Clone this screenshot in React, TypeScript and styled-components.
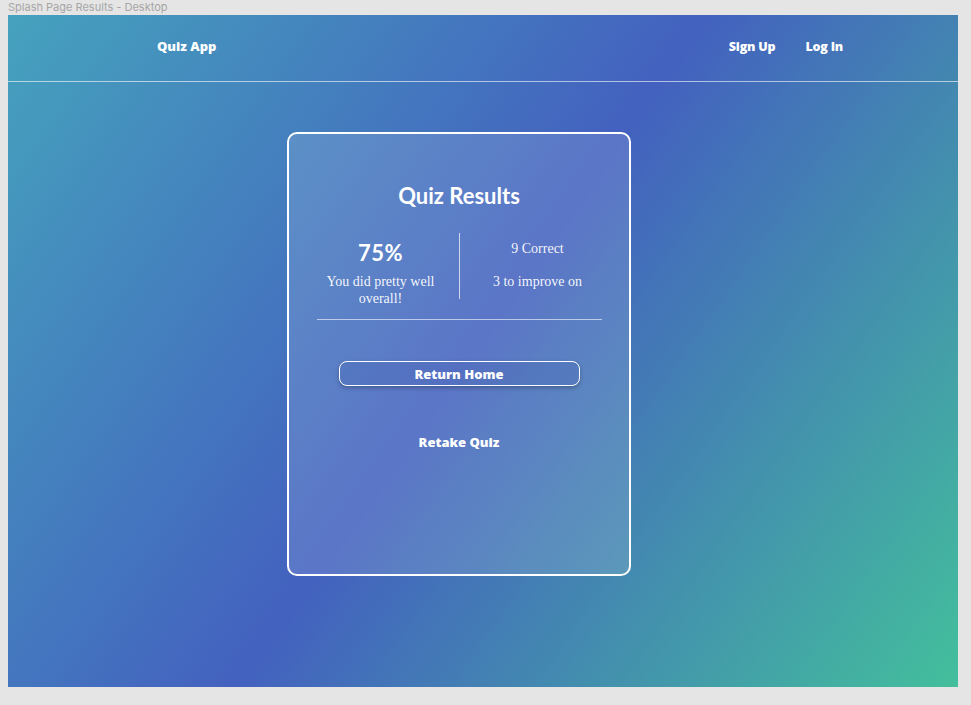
import styled, { createGlobalStyle } from 'styled-components';

const GlobalStyle = createGlobalStyle`
  html, body {
    margin: 0;
    padding: 0;
    background: #e5e5e5;
  }
  body {
    padding: 0 8px;
    font-family: 'Lato', 'Noto Sans', sans-serif;
  }
`;

const FrameLabel = styled.div`
  height: 15px;
  font-family: 'Inter', 'Noto Sans', sans-serif;
  font-size: 11px;
  line-height: 15px;
  color: #a6a6a6;
  white-space: nowrap;
`;

const Frame = styled.div`
  width: 950px;
  height: 672px;
  display: flex;
  flex-direction: column;
  color: #fff;
  background: linear-gradient(125deg, #45a2bd 0%, #4361bf 49%, #43bf9c 100%);
`;

const Header = styled.header`
  height: 67px;
  padding: 0 115px 4px 149px;
  box-sizing: border-box;
  display: flex;
  align-items: center;
  justify-content: space-between;
  border-bottom: 1px solid rgba(255, 255, 255, 0.6);
`;

const Brand = styled.span`
  font-family: 'Open Sans', 'Noto Sans', sans-serif;
  font-size: 13px;
  font-weight: 800;
`;

const NavLinks = styled.nav`
  display: flex;
  gap: 30px;
`;

const NavLink = styled.a`
  font-family: 'Open Sans', 'Noto Sans', sans-serif;
  font-size: 12.5px;
  font-weight: 800;
  letter-spacing: -0.2px;
  color: #fff;
  text-decoration: none;
`;

const Main = styled.main`
  padding: 50px 0 0 279px;
`;

const Card = styled.section`
  width: 344px;
  height: 444px;
  box-sizing: border-box;
  border: 2px solid #fff;
  border-radius: 10px;
  background: rgba(255, 255, 255, 0.13);
  padding: 48px 0 0;
  display: flex;
  flex-direction: column;
  align-items: center;
`;

const Title = styled.h1`
  margin: 0;
  font-size: 22px;
  line-height: 28px;
  font-weight: 700;
`;

const Stats = styled.div`
  margin-top: 23px;
  width: 313px;
  display: grid;
  grid-template-columns: 1fr 1px 1fr;
  align-items: start;
`;

const StatColumn = styled.div<{ $top: number; $gap: number }>`
  padding-top: ${(p) => p.$top}px;
  display: flex;
  flex-direction: column;
  align-items: center;
  gap: ${(p) => p.$gap}px;
  text-align: center;
`;

const Score = styled.div`
  font-size: 22px;
  line-height: 28px;
  font-weight: 700;
  letter-spacing: 0.5px;
`;

const SerifText = styled.p`
  margin: 0;
  max-width: 120px;
  font-family: 'Liberation Serif', 'DejaVu Serif', serif;
  font-size: 14px;
  line-height: 17px;
  color: rgba(255, 255, 255, 0.95);
`;

const VDivider = styled.div`
  width: 1px;
  height: 66px;
  background: rgba(255, 255, 255, 0.7);
`;

const HDivider = styled.hr`
  margin: 12px 0 0;
  width: 285px;
  height: 1px;
  border: none;
  background: rgba(255, 255, 255, 0.6);
`;

const PrimaryButton = styled.button`
  margin-top: 41px;
  width: 241px;
  height: 25px;
  box-sizing: border-box;
  border: 1.5px solid #fff;
  border-radius: 8px;
  background: rgba(50, 80, 160, 0.15);
  box-shadow: 0 2px 4px rgba(0, 0, 0, 0.25);
  color: #fff;
  font-family: 'Open Sans', 'Noto Sans', sans-serif;
  font-size: 13px;
  font-weight: 800;
  padding: 0;
  cursor: pointer;
`;

const TextButton = styled.button`
  margin-top: 48px;
  border: none;
  background: transparent;
  color: #fff;
  font-family: 'Open Sans', 'Noto Sans', sans-serif;
  font-size: 13px;
  line-height: 17px;
  font-weight: 800;
  padding: 0;
  cursor: pointer;
`;

export default function App() {
  return (
    <>
      <GlobalStyle />
      <FrameLabel>Splash Page Results - Desktop</FrameLabel>
      <Frame>
        <Header>
          <Brand>Quiz App</Brand>
          <NavLinks>
            <NavLink href="#">Sign Up</NavLink>
            <NavLink href="#">Log In</NavLink>
          </NavLinks>
        </Header>
        <Main>
          <Card>
            <Title>Quiz Results</Title>
            <Stats>
              <StatColumn $top={6} $gap={6}>
                <Score>75%</Score>
                <SerifText>You did pretty well overall!</SerifText>
              </StatColumn>
              <VDivider />
              <StatColumn $top={7} $gap={16}>
                <SerifText>9 Correct</SerifText>
                <SerifText>3 to improve on</SerifText>
              </StatColumn>
            </Stats>
            <HDivider />
            <PrimaryButton>Return Home</PrimaryButton>
            <TextButton>Retake Quiz</TextButton>
          </Card>
        </Main>
      </Frame>
    </>
  );
}
